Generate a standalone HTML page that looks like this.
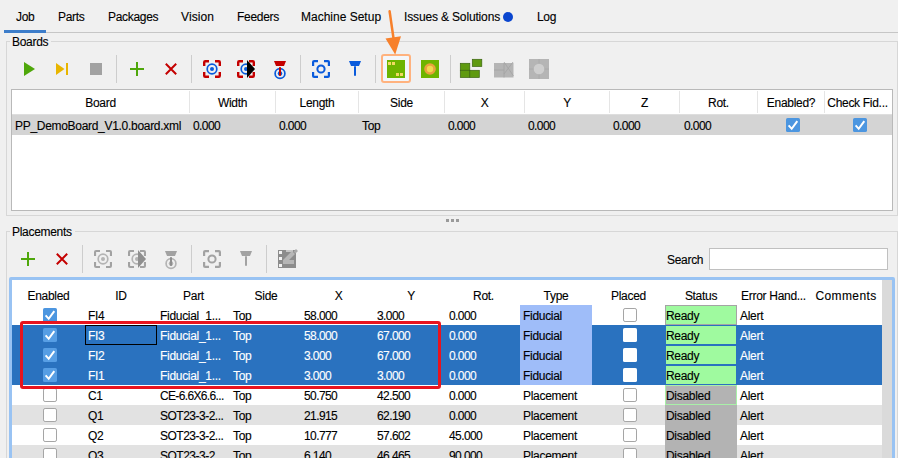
<!DOCTYPE html>
<html><head><meta charset="utf-8">
<style>
html,body{margin:0;padding:0;}
body{width:898px;height:458px;overflow:hidden;position:relative;background:#f0f0f0;font-family:"Liberation Sans",sans-serif;color:#000;}
.a{position:absolute;}
.t{position:absolute;font-size:12px;line-height:13px;letter-spacing:-0.3px;white-space:pre;-webkit-text-stroke:0.12px currentColor;}
svg.ov{position:absolute;left:0;top:0;overflow:visible;}
</style></head><body>
<div class="t" style="left:16px;top:11.30px">Job</div>
<div class="t" style="left:58px;top:11.30px">Parts</div>
<div class="t" style="left:108px;top:11.30px">Packages</div>
<div class="t" style="left:181px;top:11.30px;letter-spacing:0.1px">Vision</div>
<div class="t" style="left:237px;top:11.30px">Feeders</div>
<div class="t" style="left:301px;top:11.30px;letter-spacing:0px">Machine Setup</div>
<div class="t" style="left:404px;top:11.30px;letter-spacing:-0.15px">Issues &amp; Solutions</div>
<div class="t" style="left:537px;top:11.30px">Log</div>
<div class="a" style="left:503px;top:12px;width:10px;height:10px;border-radius:50%;background:#0a46cf"></div>
<div class="a" style="left:46px;top:32px;width:852px;height:1px;background:#c6c6c6"></div>
<div class="a" style="left:4px;top:30px;width:42px;height:3px;background:#3d7dca"></div>
<div class="a" style="left:6px;top:41px;width:890px;height:173px;border:1px solid #d7d7d7"></div>
<div class="a" style="left:10px;top:36px;width:41px;height:10px;background:#f0f0f0"></div>
<div class="t" style="left:12px;top:36.30px">Boards</div>
<div class="a" style="left:116px;top:55px;width:1px;height:28px;background:#cdcdcd"></div>
<div class="a" style="left:191px;top:55px;width:1px;height:28px;background:#cdcdcd"></div>
<div class="a" style="left:300px;top:55px;width:1px;height:28px;background:#cdcdcd"></div>
<div class="a" style="left:375px;top:55px;width:1px;height:28px;background:#cdcdcd"></div>
<div class="a" style="left:450px;top:55px;width:1px;height:28px;background:#cdcdcd"></div>
<div class="a" style="left:11px;top:89px;width:880px;height:120px;border:1px solid #b9b9b9;background:#fff"></div>
<div class="t" style="left:12px;width:177px;text-align:center;top:97.30px">Board</div>
<div class="a" style="left:189px;top:91px;width:1px;height:22px;background:#e5e5e5"></div>
<div class="t" style="left:190px;width:85px;text-align:center;top:97.30px">Width</div>
<div class="a" style="left:275px;top:91px;width:1px;height:22px;background:#e5e5e5"></div>
<div class="t" style="left:276px;width:82px;text-align:center;top:97.30px">Length</div>
<div class="a" style="left:358px;top:91px;width:1px;height:22px;background:#e5e5e5"></div>
<div class="t" style="left:359px;width:85px;text-align:center;top:97.30px">Side</div>
<div class="a" style="left:444px;top:91px;width:1px;height:22px;background:#e5e5e5"></div>
<div class="t" style="left:445px;width:79px;text-align:center;top:97.30px">X</div>
<div class="a" style="left:524px;top:91px;width:1px;height:22px;background:#e5e5e5"></div>
<div class="t" style="left:525px;width:84px;text-align:center;top:97.30px">Y</div>
<div class="a" style="left:609px;top:91px;width:1px;height:22px;background:#e5e5e5"></div>
<div class="t" style="left:610px;width:69px;text-align:center;top:97.30px">Z</div>
<div class="a" style="left:679px;top:91px;width:1px;height:22px;background:#e5e5e5"></div>
<div class="t" style="left:680px;width:77px;text-align:center;top:97.30px">Rot.</div>
<div class="a" style="left:757px;top:91px;width:1px;height:22px;background:#e5e5e5"></div>
<div class="t" style="left:758px;width:66px;text-align:center;top:97.30px">Enabled?</div>
<div class="a" style="left:824px;top:91px;width:1px;height:22px;background:#e5e5e5"></div>
<div class="t" style="left:825px;width:65px;text-align:center;top:97.30px">Check Fid...</div>
<div class="a" style="left:12px;top:114px;width:880px;height:1px;background:#dedede"></div>
<div class="a" style="left:12px;top:115px;width:880px;height:20px;background:#d4d4d4"></div>
<div class="t" style="left:15px;top:120.30px">PP_DemoBoard_V1.0.board.xml</div>
<div class="t" style="left:193px;top:120.30px;letter-spacing:-0.6px">0.000</div>
<div class="t" style="left:279px;top:120.30px;letter-spacing:-0.6px">0.000</div>
<div class="t" style="left:362px;top:120.30px">Top</div>
<div class="t" style="left:448px;top:120.30px;letter-spacing:-0.6px">0.000</div>
<div class="t" style="left:528px;top:120.30px;letter-spacing:-0.6px">0.000</div>
<div class="t" style="left:613px;top:120.30px;letter-spacing:-0.6px">0.000</div>
<div class="t" style="left:684px;top:120.30px;letter-spacing:-0.6px">0.000</div>
<div class="a" style="left:446px;top:219px;width:3px;height:3px;background:#9a9a9a"></div>
<div class="a" style="left:451px;top:219px;width:3px;height:3px;background:#9a9a9a"></div>
<div class="a" style="left:456px;top:219px;width:3px;height:3px;background:#9a9a9a"></div>
<div class="a" style="left:6px;top:231px;width:890px;height:300px;border:1px solid #d7d7d7"></div>
<div class="a" style="left:10px;top:226px;width:65px;height:10px;background:#f0f0f0"></div>
<div class="t" style="left:12px;top:226.30px">Placements</div>
<div class="a" style="left:82px;top:245px;width:1px;height:28px;background:#cdcdcd"></div>
<div class="a" style="left:191px;top:245px;width:1px;height:28px;background:#cdcdcd"></div>
<div class="a" style="left:266px;top:245px;width:1px;height:28px;background:#cdcdcd"></div>
<div class="t" style="left:667px;top:254.30px">Search</div>
<div class="a" style="left:709px;top:248px;width:177px;height:20px;border:1px solid #c0c0c0;background:#fff"></div>
<div class="a" style="left:9px;top:277px;width:880px;height:300px;border:3px solid #99c3f3;border-radius:2px;background:#fff"></div>
<div class="a" style="left:882px;top:280px;width:10px;height:178px;background:#dadada"></div>
<div class="t" style="left:12px;width:73px;text-align:center;top:290.30px">Enabled</div>
<div class="t" style="left:85px;width:72px;text-align:center;top:290.30px">ID</div>
<div class="t" style="left:157px;width:73px;text-align:center;top:290.30px">Part</div>
<div class="t" style="left:230px;width:72px;text-align:center;top:290.30px">Side</div>
<div class="t" style="left:302px;width:73px;text-align:center;top:290.30px">X</div>
<div class="t" style="left:375px;width:72px;text-align:center;top:290.30px">Y</div>
<div class="t" style="left:447px;width:73px;text-align:center;top:290.30px">Rot.</div>
<div class="t" style="left:520px;width:72px;text-align:center;top:290.30px">Type</div>
<div class="t" style="left:592px;width:73px;text-align:center;top:290.30px">Placed</div>
<div class="t" style="left:665px;width:72px;text-align:center;top:290.30px">Status</div>
<div class="t" style="left:737px;width:73px;text-align:center;top:290.30px">Error Hand...</div>
<div class="t" style="left:810px;width:72px;text-align:center;top:290.30px;letter-spacing:0.4px">Comments</div>
<div class="a" style="left:520px;top:305px;width:72px;height:20px;background:#9fbdf9"></div>
<div class="a" style="left:665px;top:305px;width:72px;height:20px;background:#9ffa9f"></div>
<div class="a" style="left:665px;top:305px;width:72px;height:20px;background:transparent;box-sizing:border-box;border:1px solid #a4a4a4"></div>
<div class="t" style="left:88px;top:310.30px">FI4</div>
<div class="t" style="left:160px;top:310.30px">Fiducial_1...</div>
<div class="t" style="left:233px;top:310.30px">Top</div>
<div class="t" style="left:304px;top:310.30px;letter-spacing:-0.6px">58.000</div>
<div class="t" style="left:377px;top:310.30px;letter-spacing:-0.6px">3.000</div>
<div class="t" style="left:449px;top:310.30px;letter-spacing:-0.6px">0.000</div>
<div class="t" style="left:523px;top:310.30px">Fiducial</div>
<div class="t" style="left:666px;top:310.30px">Ready</div>
<div class="t" style="left:740px;top:310.30px">Alert</div>
<div class="a" style="left:12px;top:325px;width:870px;height:20px;background:#2a72bf"></div>
<div class="a" style="left:520px;top:325px;width:72px;height:20px;background:#9fbdf9"></div>
<div class="a" style="left:665px;top:325px;width:72px;height:20px;background:#9ffa9f"></div>
<div class="a" style="left:665px;top:325px;width:72px;height:20px;background:transparent;box-sizing:border-box;border:1px solid #2a72bf"></div>
<div class="t" style="left:88px;top:330.30px;color:#fff">FI3</div>
<div class="t" style="left:160px;top:330.30px;color:#fff">Fiducial_1...</div>
<div class="t" style="left:233px;top:330.30px;color:#fff">Top</div>
<div class="t" style="left:304px;top:330.30px;color:#fff;letter-spacing:-0.6px">58.000</div>
<div class="t" style="left:377px;top:330.30px;color:#fff;letter-spacing:-0.6px">67.000</div>
<div class="t" style="left:449px;top:330.30px;color:#fff;letter-spacing:-0.6px">0.000</div>
<div class="t" style="left:523px;top:330.30px">Fiducial</div>
<div class="t" style="left:666px;top:330.30px">Ready</div>
<div class="t" style="left:740px;top:330.30px;color:#fff">Alert</div>
<div class="a" style="left:12px;top:345px;width:870px;height:20px;background:#2a72bf"></div>
<div class="a" style="left:520px;top:345px;width:72px;height:20px;background:#9fbdf9"></div>
<div class="a" style="left:665px;top:345px;width:72px;height:20px;background:#9ffa9f"></div>
<div class="a" style="left:665px;top:345px;width:72px;height:20px;background:transparent;box-sizing:border-box;border:1px solid #2a72bf"></div>
<div class="t" style="left:88px;top:350.30px;color:#fff">FI2</div>
<div class="t" style="left:160px;top:350.30px;color:#fff">Fiducial_1...</div>
<div class="t" style="left:233px;top:350.30px;color:#fff">Top</div>
<div class="t" style="left:304px;top:350.30px;color:#fff;letter-spacing:-0.6px">3.000</div>
<div class="t" style="left:377px;top:350.30px;color:#fff;letter-spacing:-0.6px">67.000</div>
<div class="t" style="left:449px;top:350.30px;color:#fff;letter-spacing:-0.6px">0.000</div>
<div class="t" style="left:523px;top:350.30px">Fiducial</div>
<div class="t" style="left:666px;top:350.30px">Ready</div>
<div class="t" style="left:740px;top:350.30px;color:#fff">Alert</div>
<div class="a" style="left:12px;top:365px;width:870px;height:20px;background:#2a72bf"></div>
<div class="a" style="left:520px;top:365px;width:72px;height:20px;background:#9fbdf9"></div>
<div class="a" style="left:665px;top:365px;width:72px;height:20px;background:#9ffa9f"></div>
<div class="a" style="left:665px;top:365px;width:72px;height:20px;background:transparent;box-sizing:border-box;border:1px solid #2a72bf"></div>
<div class="t" style="left:88px;top:370.30px;color:#fff">FI1</div>
<div class="t" style="left:160px;top:370.30px;color:#fff">Fiducial_1...</div>
<div class="t" style="left:233px;top:370.30px;color:#fff">Top</div>
<div class="t" style="left:304px;top:370.30px;color:#fff;letter-spacing:-0.6px">3.000</div>
<div class="t" style="left:377px;top:370.30px;color:#fff;letter-spacing:-0.6px">3.000</div>
<div class="t" style="left:449px;top:370.30px;color:#fff;letter-spacing:-0.6px">0.000</div>
<div class="t" style="left:523px;top:370.30px">Fiducial</div>
<div class="t" style="left:666px;top:370.30px">Ready</div>
<div class="t" style="left:740px;top:370.30px;color:#fff">Alert</div>
<div class="a" style="left:665px;top:385px;width:72px;height:20px;background:#b3b3b3"></div>
<div class="a" style="left:665px;top:385px;width:72px;height:20px;background:transparent;box-sizing:border-box;border:1px solid #a8f0a8"></div>
<div class="t" style="left:88px;top:390.30px">C1</div>
<div class="t" style="left:160px;top:390.30px;letter-spacing:-0.65px">CE-6.6X6.6...</div>
<div class="t" style="left:233px;top:390.30px">Top</div>
<div class="t" style="left:304px;top:390.30px;letter-spacing:-0.6px">50.750</div>
<div class="t" style="left:377px;top:390.30px;letter-spacing:-0.6px">42.500</div>
<div class="t" style="left:449px;top:390.30px;letter-spacing:-0.6px">0.000</div>
<div class="t" style="left:523px;top:390.30px">Placement</div>
<div class="t" style="left:666px;top:390.30px">Disabled</div>
<div class="t" style="left:740px;top:390.30px">Alert</div>
<div class="a" style="left:12px;top:405px;width:870px;height:20px;background:#e2e2e2"></div>
<div class="a" style="left:665px;top:405px;width:72px;height:20px;background:#b3b3b3"></div>
<div class="t" style="left:88px;top:410.30px">Q1</div>
<div class="t" style="left:160px;top:410.30px;letter-spacing:-0.5px">SOT23-3-2...</div>
<div class="t" style="left:233px;top:410.30px">Top</div>
<div class="t" style="left:304px;top:410.30px;letter-spacing:-0.6px">21.915</div>
<div class="t" style="left:377px;top:410.30px;letter-spacing:-0.6px">62.190</div>
<div class="t" style="left:449px;top:410.30px;letter-spacing:-0.6px">0.000</div>
<div class="t" style="left:523px;top:410.30px">Placement</div>
<div class="t" style="left:666px;top:410.30px">Disabled</div>
<div class="t" style="left:740px;top:410.30px">Alert</div>
<div class="a" style="left:665px;top:425px;width:72px;height:20px;background:#b3b3b3"></div>
<div class="t" style="left:88px;top:430.30px">Q2</div>
<div class="t" style="left:160px;top:430.30px;letter-spacing:-0.5px">SOT23-3-2...</div>
<div class="t" style="left:233px;top:430.30px">Top</div>
<div class="t" style="left:304px;top:430.30px;letter-spacing:-0.6px">10.777</div>
<div class="t" style="left:377px;top:430.30px;letter-spacing:-0.6px">57.602</div>
<div class="t" style="left:449px;top:430.30px;letter-spacing:-0.6px">45.000</div>
<div class="t" style="left:523px;top:430.30px">Placement</div>
<div class="t" style="left:666px;top:430.30px">Disabled</div>
<div class="t" style="left:740px;top:430.30px">Alert</div>
<div class="a" style="left:12px;top:445px;width:870px;height:20px;background:#e2e2e2"></div>
<div class="a" style="left:665px;top:445px;width:72px;height:20px;background:#b3b3b3"></div>
<div class="t" style="left:88px;top:450.30px">Q3</div>
<div class="t" style="left:160px;top:450.30px;letter-spacing:-0.5px">SOT23-3-2...</div>
<div class="t" style="left:233px;top:450.30px">Top</div>
<div class="t" style="left:304px;top:450.30px;letter-spacing:-0.6px">6.140</div>
<div class="t" style="left:377px;top:450.30px;letter-spacing:-0.6px">46.465</div>
<div class="t" style="left:449px;top:450.30px;letter-spacing:-0.6px">90.000</div>
<div class="t" style="left:523px;top:450.30px">Placement</div>
<div class="t" style="left:666px;top:450.30px">Disabled</div>
<div class="t" style="left:740px;top:450.30px">Alert</div>
<div class="a" style="left:85px;top:325px;width:72px;height:20px;background:transparent;box-sizing:border-box;border:1px solid #000"></div>
<svg class="ov" width="898" height="458" viewBox="0 0 898 458">
<path d="M24 62L35 69L24 76Z" fill="#4fa70b"/>
<path d="M56 63L64.5 69L56 75Z" fill="#e8b500"/><rect x="66" y="63" width="2" height="12" fill="#e8b500"/>
<rect x="90" y="63" width="12" height="12" fill="#a2a2a2"/>
<rect x="130" y="68" width="14" height="2" fill="#4fa70b"/><rect x="136" y="62" width="2" height="14" fill="#4fa70b"/>
<path d="M165.8 63.8L176.2 74.2M176.2 63.8L165.8 74.2" stroke="#c40000" stroke-width="2" fill="none"/>
<path d="M204.2 66.0V62.2Q204.2 61.2 205.2 61.2H209.0M215.0 61.2H218.8Q219.8 61.2 219.8 62.2V66.0M204.2 72.0V75.8Q204.2 76.8 205.2 76.8H209.0M215.0 76.8H218.8Q219.8 76.8 219.8 75.8V72.0" stroke="#c40000" stroke-width="2.4" fill="none"/>
<circle cx="212" cy="69" r="4.8" stroke="#0a5bdc" stroke-width="1.7" fill="none"/><circle cx="212" cy="69" r="2" fill="#0a5bdc"/>
<path d="M238.2 66.0V62.2Q238.2 61.2 239.2 61.2H243.0M249.0 61.2H252.8Q253.8 61.2 253.8 62.2V66.0M238.2 72.0V75.8Q238.2 76.8 239.2 76.8H243.0M249.0 76.8H252.8Q253.8 76.8 253.8 75.8V72.0" stroke="#c40000" stroke-width="2.4" fill="none"/>
<circle cx="246" cy="69" r="4.8" stroke="#0a5bdc" stroke-width="1.7" fill="none"/><circle cx="246" cy="69" r="2" fill="#0a5bdc"/>
<path d="M247 60L255 69L247 78Z" fill="#000"/>
<path d="M274 61H286L284 66H276Z" fill="#c40000"/>
<circle cx="280" cy="73.5" r="4.9" stroke="#0a5bdc" stroke-width="1.7" fill="none"/><circle cx="280" cy="73.5" r="2.3" fill="#0a5bdc"/>
<rect x="279" y="67" width="2" height="9" rx="0.8" fill="#c40000"/>
<path d="M313.1 66.0V62.1Q313.1 61.1 314.1 61.1H318.0M324.0 61.1H327.9Q328.9 61.1 328.9 62.1V66.0M313.1 72.0V75.9Q313.1 76.9 314.1 76.9H318.0M324.0 76.9H327.9Q328.9 76.9 328.9 75.9V72.0" stroke="#0a5bdc" stroke-width="2.2" fill="none"/>
<circle cx="321" cy="69" r="3.6" stroke="#0a5bdc" stroke-width="2" fill="none"/>
<path d="M349 61H361L359 66H351Z" fill="#0a5bdc"/>
<rect x="354" y="66" width="2" height="10" rx="1" fill="#0a5bdc"/>
<rect x="382" y="55" width="28" height="27" rx="2" fill="#f3f6fa" stroke="#ffb27e" stroke-width="2"/>
<rect x="387" y="60" width="18" height="18" fill="#6eb400"/>
<rect x="388" y="62" width="3" height="3" fill="#f2da62"/>
<rect x="392" y="62" width="3" height="3" fill="#f2da62"/>
<rect x="396" y="73" width="3" height="3" fill="#f2da62"/>
<rect x="400" y="73" width="3" height="3" fill="#f2da62"/>
<rect x="421" y="60" width="18" height="18" fill="#6eb400"/><circle cx="430" cy="69" r="5.8" fill="#e9a23e"/><circle cx="430" cy="69" r="3.2" fill="#f2d84e"/>
<rect x="460.3" y="63.3" width="9.5" height="7" fill="#5f9a10" stroke="#3b6410" stroke-width="0.7"/>
<rect x="460.3" y="70.3" width="9.5" height="7.2" fill="#5f9a10" stroke="#3b6410" stroke-width="0.7"/>
<rect x="469.8" y="70.3" width="9.5" height="7.2" fill="#5f9a10" stroke="#3b6410" stroke-width="0.7"/>
<rect x="472.3" y="59.3" width="9.5" height="7.2" fill="#5f9a10" stroke="#3b6410" stroke-width="0.7"/>
<rect x="494" y="63" width="19.5" height="14.5" fill="#b5b5b5"/><path d="M494 70H504M504 63V77.5M504 62L513.5 76M513 62L504 74" stroke="#a3a3a3" stroke-width="0.8" fill="none"/>
<rect x="529" y="59" width="20" height="20" fill="#b5b5b5"/><path d="M529 69H549M539 59V79" stroke="#a8a8a8" stroke-width="0.8"/><circle cx="539" cy="69" r="5.3" fill="#cecece"/>
<path d="M389.6 11.2L393.6 39" stroke="#f7802b" stroke-width="2.5" fill="none" stroke-linecap="round"/><path d="M385.5 38.5L401 36.3L395.2 54.5Z" fill="#f7802b"/>
<rect x="786" y="118" width="14" height="14" rx="1.6" fill="#4c96e0"/>
<path d="M788.6 125.4L791.7 128.8L797.3 121.2" stroke="#fff" stroke-width="2" fill="none"/>
<rect x="853" y="118" width="14" height="14" rx="1.6" fill="#4c96e0"/>
<path d="M855.6 125.4L858.7 128.8L864.3 121.2" stroke="#fff" stroke-width="2" fill="none"/>
<rect x="21" y="258" width="14" height="2" fill="#4fa70b"/><rect x="27" y="252" width="2" height="14" fill="#4fa70b"/>
<path d="M56.8 253.8L67.2 264.2M67.2 253.8L56.8 264.2" stroke="#c40000" stroke-width="2" fill="none"/>
<path d="M95.05 256.0V252.05Q95.05 251.05 96.05 251.05H100.0M106.0 251.05H109.95Q110.95 251.05 110.95 252.05V256.0M95.05 262.0V265.95Q95.05 266.95 96.05 266.95H100.0M106.0 266.95H109.95Q110.95 266.95 110.95 265.95V262.0" stroke="#a2a2a2" stroke-width="2.1" fill="none"/>
<circle cx="103" cy="259" r="4.8" stroke="#b4b4b4" stroke-width="1.7" fill="none"/><circle cx="103" cy="259" r="2" fill="#b4b4b4"/>
<path d="M129.05 256.0V252.05Q129.05 251.05 130.05 251.05H134.0M140.0 251.05H143.95Q144.95 251.05 144.95 252.05V256.0M129.05 262.0V265.95Q129.05 266.95 130.05 266.95H134.0M140.0 266.95H143.95Q144.95 266.95 144.95 265.95V262.0" stroke="#a2a2a2" stroke-width="2.1" fill="none"/>
<circle cx="137" cy="259" r="4.8" stroke="#b4b4b4" stroke-width="1.7" fill="none"/><circle cx="137" cy="259" r="2" fill="#b4b4b4"/>
<path d="M138 250L146 259L138 268Z" fill="#8f8f8f"/>
<path d="M165 251H177L175 256H167Z" fill="#a2a2a2"/>
<circle cx="171" cy="263.5" r="4.9" stroke="#b4b4b4" stroke-width="1.7" fill="none"/><circle cx="171" cy="263.5" r="2.3" fill="#b4b4b4"/>
<rect x="170" y="257" width="2" height="9" rx="0.8" fill="#8f8f8f"/>
<path d="M204.1 256.0V252.1Q204.1 251.1 205.1 251.1H209.0M215.0 251.1H218.9Q219.9 251.1 219.9 252.1V256.0M204.1 262.0V265.9Q204.1 266.9 205.1 266.9H209.0M215.0 266.9H218.9Q219.9 266.9 219.9 265.9V262.0" stroke="#a2a2a2" stroke-width="2.2" fill="none"/>
<circle cx="212" cy="259" r="3.6" stroke="#a2a2a2" stroke-width="2" fill="none"/>
<path d="M240 251H252L250 256H242Z" fill="#a2a2a2"/>
<rect x="245" y="256" width="2" height="10" rx="1" fill="#a2a2a2"/>
<rect x="278" y="250" width="18" height="18" fill="#8c8c8c"/>
<rect x="279" y="251" width="3" height="3" fill="#f2f2f2"/>
<rect x="279" y="257" width="3" height="3" fill="#f2f2f2"/>
<rect x="279" y="264" width="3" height="3" fill="#f2f2f2"/>
<rect x="286" y="250" width="7" height="2" fill="#c6c6c6"/>
<path d="M283 264V260L292 251L295 254L289 260H294V264Z" fill="#b6b6b6"/>
<path d="M293.5 251.5L296 249L298 251L295.5 253.5Z" fill="#a9a9a9"/>
<rect x="43" y="308" width="14" height="14" rx="1.6" fill="#4c96e0"/>
<path d="M45.6 315.4L48.7 318.8L54.3 311.2" stroke="#fff" stroke-width="2" fill="none"/>
<rect x="623.5" y="308.5" width="13" height="13" rx="1.6" fill="#fff" stroke="#a5a5a5" stroke-width="1"/>
<rect x="43" y="328" width="14" height="14" rx="1.6" fill="#579ee4"/>
<path d="M45.6 335.4L48.7 338.8L54.3 331.2" stroke="#fff" stroke-width="2" fill="none"/>
<rect x="623" y="328" width="14" height="14" rx="1.6" fill="#fff"/>
<rect x="43" y="348" width="14" height="14" rx="1.6" fill="#579ee4"/>
<path d="M45.6 355.4L48.7 358.8L54.3 351.2" stroke="#fff" stroke-width="2" fill="none"/>
<rect x="623" y="348" width="14" height="14" rx="1.6" fill="#fff"/>
<rect x="43" y="368" width="14" height="14" rx="1.6" fill="#579ee4"/>
<path d="M45.6 375.4L48.7 378.8L54.3 371.2" stroke="#fff" stroke-width="2" fill="none"/>
<rect x="623" y="368" width="14" height="14" rx="1.6" fill="#fff"/>
<rect x="43.5" y="388.5" width="13" height="13" rx="1.6" fill="#fff" stroke="#a5a5a5" stroke-width="1"/>
<rect x="623.5" y="388.5" width="13" height="13" rx="1.6" fill="#fff" stroke="#a5a5a5" stroke-width="1"/>
<rect x="43.5" y="408.5" width="13" height="13" rx="1.6" fill="#fff" stroke="#a5a5a5" stroke-width="1"/>
<rect x="623.5" y="408.5" width="13" height="13" rx="1.6" fill="#fff" stroke="#a5a5a5" stroke-width="1"/>
<rect x="43.5" y="428.5" width="13" height="13" rx="1.6" fill="#fff" stroke="#a5a5a5" stroke-width="1"/>
<rect x="623.5" y="428.5" width="13" height="13" rx="1.6" fill="#fff" stroke="#a5a5a5" stroke-width="1"/>
<rect x="43.5" y="448.5" width="13" height="13" rx="1.6" fill="#fff" stroke="#a5a5a5" stroke-width="1"/>
<rect x="623.5" y="448.5" width="13" height="13" rx="1.6" fill="#fff" stroke="#a5a5a5" stroke-width="1"/>
<rect x="21.5" y="322.5" width="418" height="65" rx="1.5" fill="none" stroke="#e8141e" stroke-width="3"/>
</svg>
</body></html>
